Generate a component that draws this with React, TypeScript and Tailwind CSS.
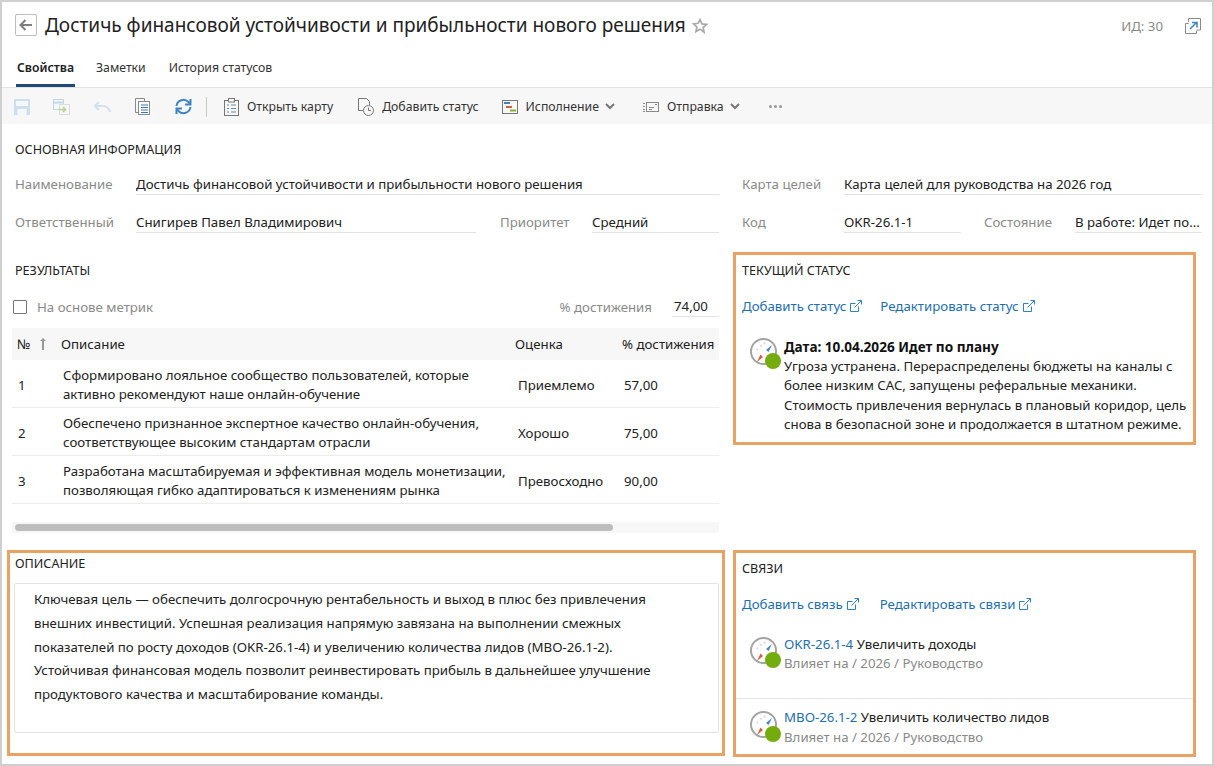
import React from "react";

const ff = { fontFamily: '"Noto Sans","Open Sans",sans-serif' };

function Ext() {
  return (
    <svg width="12" height="12" viewBox="0 0 12 12" fill="none" stroke="#2f7fc1" strokeWidth="1" className="ml-[4px] inline-block align-[-1px]">
      <path d="M8.500 6.500v5h-8v-8h5" />
      <path d="M4.500 7.500l7-7M7.500.5h4v4" />
    </svg>
  );
}

function Gauge() {
  return (
    <svg width="32" height="32" viewBox="0 0 32 32" fill="none" className="shrink-0">
      <circle cx="13.500" cy="13.500" r="12.500" stroke="#a3a3a3" strokeWidth="2" />
      <path d="M10.500 7l1 1.500M6.500 11l1.500 1M14.500 4.500v2" stroke="#d9d9d9" strokeWidth="2" />
      <path d="M22 7l-3.500 7-2.500-2z" fill="#4a86c5" />
      <path d="M7 24l3.500-7.500 2.500 2.500z" fill="#d9603f" />
      <circle cx="23" cy="23" r="8" fill="#74ac0e" />
    </svg>
  );
}

function Field({ label, value, labelW, w }: { label: string; value: string; labelW: string; w: string }) {
  return (
    <div className={`flex items-start ${w}`}>
      <div className={`${labelW} text-[#8a8a8a]`}>{label}</div>
      <div className="min-w-0 flex-1 truncate border-b border-[#e2e2e2] pb-[1px] text-[#222]">{value}</div>
    </div>
  );
}

function Tool({ icon, text, chevron, cls }: { icon: React.ReactNode; text: string; chevron?: boolean; cls: string }) {
  return (
    <div className={`flex items-center ${cls}`}>
      {icon}
      <span className="ml-[8px] text-[#333]">{text}</span>
      {chevron && (
        <svg width="10" height="7" viewBox="0 0 10 7" fill="none" stroke="#777" strokeWidth="2" className="ml-[6px]">
          <path d="M1 1l4 4 4-4" />
        </svg>
      )}
    </div>
  );
}

const rows = [
  ["1", "Сформировано лояльное сообщество пользователей, которые", "активно рекомендуют наше онлайн-обучение", "Приемлемо", "57,00"],
  ["2", "Обеспечено признанное экспертное качество онлайн-обучения,", "соответствующее высоким стандартам отрасли", "Хорошо", "75,00"],
  ["3", "Разработана масштабируемая и эффективная модель монетизации,", "позволяющая гибко адаптироваться к изменениям рынка", "Превосходно", "90,00"],
];

export default function App() {
  return (
    <div style={ff} className="h-[766px] w-[1214px] overflow-hidden border-x-2 border-y-[2px] border-[#cfcfcf] bg-white text-[13.250px] leading-[18px] text-[#222]">
      {/* Header */}
      <div className="flex h-[47px] items-start pl-[13px] pr-[11px] pt-[11px]">
        <div className="mt-[1px] flex h-[22px] w-[22px] items-center justify-center rounded-[2px] border border-[#bdbdbd]">
          <svg width="14" height="12" viewBox="0 0 14 12" fill="none" stroke="#7d7d7d" strokeWidth="2">
            <path d="M13 6H2M6.500 1L1.500 6l5 5" />
          </svg>
        </div>
        <h1 className="ml-[8px] text-[19px] leading-[24px] text-[#222]">Достичь финансовой устойчивости и прибыльности нового решения</h1>
        <svg width="16" height="16" viewBox="0 0 24 24" fill="none" stroke="#a8a8a8" strokeWidth="2.500" className="ml-[6px] mt-[5px]">
          <path d="M12 2.500l2.900 6.400 6.900.8-5.100 4.700 1.400 6.900L12 16.800l-6.100 3.500 1.400-6.900L2.200 8.700l6.900-.8z" />
        </svg>
        <div className="ml-auto mt-[4px] text-[#8a8a8a]">ИД: 30</div>
        <svg width="16" height="16" viewBox="0 0 16 16" fill="none" className="ml-[22px] mt-[5px]">
          <path d="M3.500 4V.5h12v11.500h-3.500" stroke="#8a8a8a" />
          <path d="M3.500 5.500h-3v10h11v-3" stroke="#8a8a8a" />
          <path d="M5 11l6-6M7 4.500h5v5" stroke="#3d84c6" strokeWidth="1.500" />
        </svg>
      </div>

      {/* Tabs */}
      <div className="flex h-[38px] items-start pl-[14px] pt-[9px] text-[12.250px]">
        <div className="flex h-[29px] w-[59px] justify-center border-b-[3px] border-[#1f4a78] pt-[1px] font-semibold text-[#222]">Свойства</div>
        <div className="ml-[21px] pt-[1px] text-[#333]">Заметки</div>
        <div className="ml-[23px] pt-[1px] text-[#333]">История статусов</div>
      </div>

      {/* Toolbar */}
      <div className="flex h-[37px] items-center border-t border-[#e2e2e2] bg-[#f7f7f7] pl-[12px] pt-[1px] text-[12.250px]">
        <svg width="16" height="16" viewBox="0 0 16 16" className="shrink-0">
          <rect width="16" height="16" fill="#cddfee" />
          <rect x="2" y="2" width="12" height="5" fill="#f4f8fb" />
          <rect x="3.500" y="10" width="9" height="6" fill="#f4f8fb" />
        </svg>
        <svg width="17" height="16" viewBox="0 0 17 16" fill="none" className="ml-[23px] shrink-0">
          <rect x="0.500" y="0.500" width="10" height="10" fill="#f4f8fb" stroke="#c3d6e8" />
          <path d="M1 3.500h9" stroke="#c3d6e8" strokeWidth="2" />
          <rect x="6.500" y="5.500" width="10" height="10" fill="#f7f7f7" stroke="#dcdcdc" />
          <path d="M6 10.500h6M10 8l2.500 2.500L10 13" stroke="#b7d18a" strokeWidth="1.500" />
        </svg>
        <svg width="18" height="12" viewBox="0 0 18 12" fill="none" stroke="#d3e1ee" strokeWidth="2" className="ml-[23px] shrink-0">
          <path d="M17 11c-1-4-4-6-7-6H2M6 1L2 5l4 4" />
        </svg>
        <svg width="15" height="17" viewBox="0 0 15 17" fill="none" className="ml-[24px] shrink-0">
          <path d="M3.500 14.500H.5V.5h9V3" stroke="#8a8a8a" />
          <rect x="3.500" y="3.500" width="11" height="13" fill="#fff" stroke="#8a8a8a" />
          <path d="M6 7h7M6 9.500h7M6 12h7M6 14.500h7" stroke="#3b78b8" />
        </svg>
        <svg width="17" height="17" viewBox="0 0 17 17" fill="none" stroke="#3d84c6" strokeWidth="2" className="ml-[25px] shrink-0">
          <path d="M1.500 8a7 7 0 0 1 12-4l1.500 2" />
          <path d="M15.500 1v5.500H10" />
          <path d="M15.500 9a7 7 0 0 1-12 4L2 11" />
          <path d="M1.500 16v-5.500H7" />
        </svg>
        <div className="ml-[14px] h-[20px] w-px bg-[#c8c8c8]" />
        <Tool
          cls="ml-[17px]"
          text="Открыть карту"
          icon={
            <svg width="15" height="18" viewBox="0 0 15 18" fill="none" stroke="#777">
              <rect x="0.500" y="2.500" width="14" height="15" />
              <rect x="4.500" y="0.500" width="6" height="3.500" fill="#f7f7f7" />
              <path d="M3 7h2M7 7h5M3 10.500h2M7 10.500h5M3 14h2M7 14h5" stroke="#5f8fb5" />
            </svg>
          }
        />
        <Tool
          cls="ml-[25px]"
          text="Добавить статус"
          icon={
            <svg width="16" height="18" viewBox="0 0 16 18" fill="none" stroke="#777">
              <path d="M5 12.500H.5V.5h8l3 3V7" />
              <circle cx="10.500" cy="12.500" r="5" />
              <path d="M10.500 9.500v3h2.500" />
            </svg>
          }
        />
        <Tool
          cls="ml-[23px]"
          text="Исполнение"
          chevron
          icon={
            <svg width="16" height="14" viewBox="0 0 16 14" fill="none">
              <rect x="0.500" y="0.500" width="15" height="13" stroke="#777" />
              <rect x="2" y="2" width="6" height="2" fill="#3d84c6" />
              <rect x="4" y="6" width="6" height="2" fill="#d9603f" />
              <rect x="8" y="9.500" width="6" height="2" fill="#8ab02d" />
            </svg>
          }
        />
        <Tool
          cls="ml-[28px]"
          text="Отправка"
          chevron
          icon={
            <svg width="16" height="10" viewBox="0 0 16 10" fill="none" stroke="#8a8a8a">
              <path d="M0 1.500h2M0 4.500h2M0 7.500h2M0 9.500h2" />
              <rect x="3.500" y="0.500" width="12" height="9" />
              <path d="M6 5.500h5M6 7.500h3M12 2.500h2" />
            </svg>
          }
        />
        <div className="ml-[29px] flex gap-[2px]">
          <span className="h-[3px] w-[3px] rounded-full bg-[#999]" />
          <span className="h-[3px] w-[3px] rounded-full bg-[#999]" />
          <span className="h-[3px] w-[3px] rounded-full bg-[#999]" />
        </div>
      </div>

      {/* Main info */}
      <div className="pl-[13px] pt-[17px]">
        <div className="text-[12.600px]">ОСНОВНАЯ ИНФОРМАЦИЯ</div>
        <div className="mt-[16px] flex">
          <Field label="Наименование" value="Достичь финансовой устойчивости и прибыльности нового решения" labelW="w-[121px]" w="w-[704px]" />
          <Field label="Карта целей" value="Карта целей для руководства на 2026 год" labelW="w-[102px]" w="ml-[23px] w-[460px]" />
        </div>
        <div className="mt-[18px] flex">
          <Field label="Ответственный" value="Снигирев Павел Владимирович" labelW="w-[121px]" w="w-[461px]" />
          <Field label="Приоритет" value="Средний" labelW="w-[92px]" w="ml-[24px] w-[219px]" />
          <Field label="Код" value="OKR-26.1-1" labelW="w-[102px]" w="ml-[23px] w-[219px]" />
          <Field label="Состояние" value="В работе: Идет по..." labelW="w-[91px]" w="ml-[23px] w-[218px]" />
        </div>
      </div>

      {/* Two columns */}
      <div className="mt-[19px] flex items-start">
        <div className="ml-[5px] w-[718px]">
          <div className="pl-[8px] pt-[10px] text-[12.600px]">РЕЗУЛЬТАТЫ</div>
          <div className="mt-[17px] flex h-[20px] items-center pl-[6px] pr-[6px]">
            <span className="h-[14px] w-[14px] rounded-[1px] border border-[#777]" />
            <span className="ml-[10px] text-[#8a8a8a]">На основе метрик</span>
            <span className="ml-auto text-[#8a8a8a]">% достижения</span>
            <span className="ml-[20px] w-[47px] border-b border-[#e2e2e2] pb-[1px] pl-[2px]">74,00</span>
          </div>
          <div className="ml-[5px] mr-[6px] mt-[11px]">
            <div className="flex h-[32px] items-center bg-[#f7f7f7]">
              <span className="ml-[5px] w-[23px]">№</span>
              <svg width="6" height="12" viewBox="0 0 6 12" fill="#999" className="w-[6px]">
                <path d="M3 0l3 3H4v9H2V3H0z" />
              </svg>
              <span className="ml-[15px] w-[454px]">Описание</span>
              <span className="w-[107px]">Оценка</span>
              <span className="whitespace-nowrap">% достижения</span>
            </div>
            {rows.map((r) => (
              <div key={r[0]} className="flex h-[48px] items-center border-b border-[#ececec] pt-[3px]">
                <span className="ml-[6px] w-[45px]">{r[0]}</span>
                <div className="w-[455px] leading-[19px]">
                  <div className="whitespace-nowrap">{r[1]}</div>
                  <div className="whitespace-nowrap">{r[2]}</div>
                </div>
                <span className="w-[106px]">{r[3]}</span>
                <span>{r[4]}</span>
              </div>
            ))}
            <div className="mt-[18px] h-[11px] bg-[#f7f7f7] px-[3px] py-[2px]">
              <div className="h-[7px] w-[598px] rounded-full bg-[#bdbdbd]" />
            </div>
          </div>
          <div className="mt-[17px] h-[206px] w-[718px] border-[3px] border-[#e8a263] pl-[5px] pr-[3px]">
            <div className="pt-[2px] text-[12.600px]">ОПИСАНИЕ</div>
            <div className="-ml-[1px] mt-[10px] h-[150px] rounded-[2px] border border-[#e2e2e2] pl-[19px] pt-[4px] leading-[23.750px]">
              <div className="whitespace-nowrap">Ключевая цель — обеспечить долгосрочную рентабельность и выход в плюс без привлечения</div>
              <div className="whitespace-nowrap">внешних инвестиций. Успешная реализация напрямую завязана на выполнении смежных</div>
              <div className="whitespace-nowrap">показателей по росту доходов (OKR-26.1-4) и увеличению количества лидов (MBO-26.1-2).</div>
              <div className="whitespace-nowrap">Устойчивая финансовая модель позволит реинвестировать прибыль в дальнейшее улучшение</div>
              <div className="whitespace-nowrap">продуктового качества и масштабирование команды.</div>
            </div>
          </div>
        </div>

        <div className="ml-[8px] w-[463px]">
          <div className="h-[193px] border-[3px] border-[#e8a263] pl-[6px]">
            <div className="pt-[7px] text-[12.600px]">ТЕКУЩИЙ СТАТУС</div>
            <div className="mt-[17px] flex text-[#1d6fb0]">
              <span>Добавить статус<Ext /></span>
              <span className="ml-[18px]">Редактировать статус<Ext /></span>
            </div>
            <div className="ml-[8px] mt-[22px] flex">
              <div className="mt-[1px]"><Gauge /></div>
              <div className="ml-[2px] leading-[19.500px]">
                <div className="text-[13.600px] font-bold text-[#111]">Дата: 10.04.2026 Идет по плану</div>
                <div className="whitespace-nowrap">Угроза устранена. Перераспределены бюджеты на каналы с</div>
                <div className="whitespace-nowrap">более низким CAC, запущены реферальные механики.</div>
                <div className="whitespace-nowrap">Стоимость привлечения вернулась в плановый коридор, цель</div>
                <div className="whitespace-nowrap">снова в безопасной зоне и продолжается в штатном режиме.</div>
              </div>
            </div>
          </div>
          <div className="mt-[105px] h-[207px] border-[3px] border-[#e8a263] pl-[6px]">
            <div className="pt-[7px] text-[12.600px]">СВЯЗИ</div>
            <div className="mt-[17px] flex text-[#1d6fb0]">
              <span>Добавить связь<Ext /></span>
              <span className="ml-[21px]">Редактировать связи<Ext /></span>
            </div>
            <div className="-ml-[6px] mt-[22px] flex h-[64px] border-b border-[#e6e6e6] pl-[14px]">
              <div className="mt-[2px]"><Gauge /></div>
              <div className="ml-[2px] leading-[19px]">
                <div><span className="text-[#1d6fb0]">OKR-26.1-4</span> Увеличить доходы</div>
                <div className="text-[#8a8a8a]">Влияет на / 2026 / Руководство</div>
              </div>
            </div>
            <div className="-ml-[6px] mt-[9px] flex pl-[14px]">
              <div className="mt-[3px]"><Gauge /></div>
              <div className="ml-[2px] leading-[19.500px]">
                <div><span className="text-[#1d6fb0]">MBO-26.1-2</span> Увеличить количество лидов</div>
                <div className="text-[#8a8a8a]">Влияет на / 2026 / Руководство</div>
              </div>
            </div>
          </div>
        </div>
      </div>
    </div>
  );
}
